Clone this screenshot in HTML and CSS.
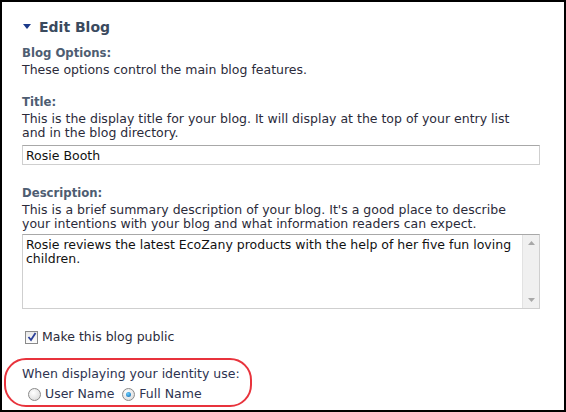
FILE: index.html
```html
<!DOCTYPE html>
<html>
<head>
<meta charset="utf-8">
<link rel="stylesheet" href="styles.css">
</head>
<body>
<div class="panel">
  <h2 class="heading"><svg class="tri" width="8" height="6" viewBox="0 0 8 6"><path d="M0 0H8L4 5Z" fill="#1b3a8a"/></svg>Edit Blog</h2>

  <div class="field">
    <div class="label">Blog Options:</div>
    <div class="help">These options control the main blog features.</div>
  </div>

  <div class="field">
    <div class="label">Title:</div>
    <div class="help">This is the display title for your blog. It will display at the top of your entry list and in the blog directory.</div>
    <div class="input">Rosie Booth</div>
  </div>

  <div class="field">
    <div class="label">Description:</div>
    <div class="help">This is a brief summary description of your blog. It's a good place to describe your intentions with your blog and what information readers can expect.</div>
    <div class="textarea">
      <div class="ta-text">Rosie reviews the latest EcoZany products with the help of her five fun loving children.</div>
      <div class="ta-scroll">
        <svg width="7" height="4" viewBox="0 0 7 4"><path d="M0 4L3.5 0L7 4Z" fill="#a8a8a8"/></svg>
        <svg width="7" height="4" viewBox="0 0 7 4"><path d="M0 0L3.5 4L7 0Z" fill="#a8a8a8"/></svg>
      </div>
    </div>
  </div>

  <label class="check-row"><span class="checkbox"><svg width="10" height="10" viewBox="0 0 10 10"><path d="M1.5 5L4 8L8.5 1" fill="none" stroke="#2a3f9a" stroke-width="1.8"/></svg></span>Make this blog public</label>

  <div class="identity">
    <div class="id-label">When displaying your identity use:</div>
    <div class="radios">
      <span class="radio-item"><span class="radio"></span>User Name</span>
      <span class="radio-item"><span class="radio checked"></span>Full Name</span>
    </div>
  </div>
</div>
</body>
</html>
```
FILE: styles.css
```css
html, body {
  margin: 0;
  padding: 0;
  background: #fff;
}
.panel {
  width: 566px;
  height: 412px;
  box-sizing: border-box;
  border: 2px solid #000;
  padding: 15px 24px 0 20px;
  font-family: "DejaVu Sans", Verdana, sans-serif;
  font-size: 12.5px;
  color: #2b2b3a;
  overflow: hidden;
}
.heading {
  margin: 0 0 8px 0;
  font-size: 14px;
  font-weight: bold;
  line-height: 20px;
  color: #3a4a5e;
  display: flex;
  align-items: center;
}
.tri {
  margin: 0 8px 0 1px;
}
.field {
  margin-bottom: 20px;
}
.field:first-of-type {
  margin-bottom: 17px;
}
.label {
  font-weight: bold;
  font-size: 11.7px;
  color: #4e5d72;
  line-height: 16px;
}
.help {
  line-height: 14px;
  margin-top: 2px;
  max-width: 500px;
}
.input {
  margin-top: 5px;
  height: 20px;
  box-sizing: border-box;
  border: 1px solid #cfcfcf;
  border-top-color: #a8a8a8;
  padding: 2px 3px;
  line-height: 15px;
  color: #111;
}
.textarea {
  margin-top: 3px;
  height: 75px;
  box-sizing: border-box;
  border: 1px solid #cfcfcf;
  border-top-color: #a8a8a8;
  display: flex;
  color: #111;
}
.ta-text {
  flex: 1;
  padding: 3px 3px;
  line-height: 14px;
}
.ta-scroll {
  width: 16px;
  background: #f0f0f0;
  border-left: 1px solid #e2e2e2;
  display: flex;
  flex-direction: column;
  justify-content: space-between;
  align-items: center;
  padding: 6px 0 6px;
}
.check-row {
  display: flex;
  align-items: center;
  margin-top: 2px;
  padding-left: 3px;
  line-height: 16px;
}
.checkbox {
  width: 11px;
  height: 11px;
  border: 1px solid #8a8a8a;
  background: linear-gradient(#e8e8e8, #fdfdfd);
  margin-right: 4px;
  display: flex;
  align-items: center;
  justify-content: center;
}
.identity {
  margin: 13px 0 0 -18px;
  width: 248px;
  height: 49px;
  box-sizing: border-box;
  border: 2px solid #e8333c;
  border-radius: 22px;
  padding: 6px 0 0 16px;
}
.id-label {
  line-height: 16px;
  color: #2d3350;
}
.radios {
  display: flex;
  gap: 8px;
  padding-left: 6px;
  margin-top: 5px;
  line-height: 14px;
  color: #2d3350;
}
.radio-item {
  display: flex;
  align-items: center;
}
.radio {
  width: 11px;
  height: 11px;
  border-radius: 50%;
  border: 1px solid #8a8a8a;
  background: radial-gradient(circle at 40% 35%, #ffffff, #d4d4d4);
  margin-right: 4px;
  position: relative;
}
.radio.checked::after {
  content: "";
  position: absolute;
  left: 3px;
  top: 3px;
  width: 5px;
  height: 5px;
  border-radius: 50%;
  background: radial-gradient(circle at 40% 35%, #6ad0ff, #0b5fa8);
}
```
